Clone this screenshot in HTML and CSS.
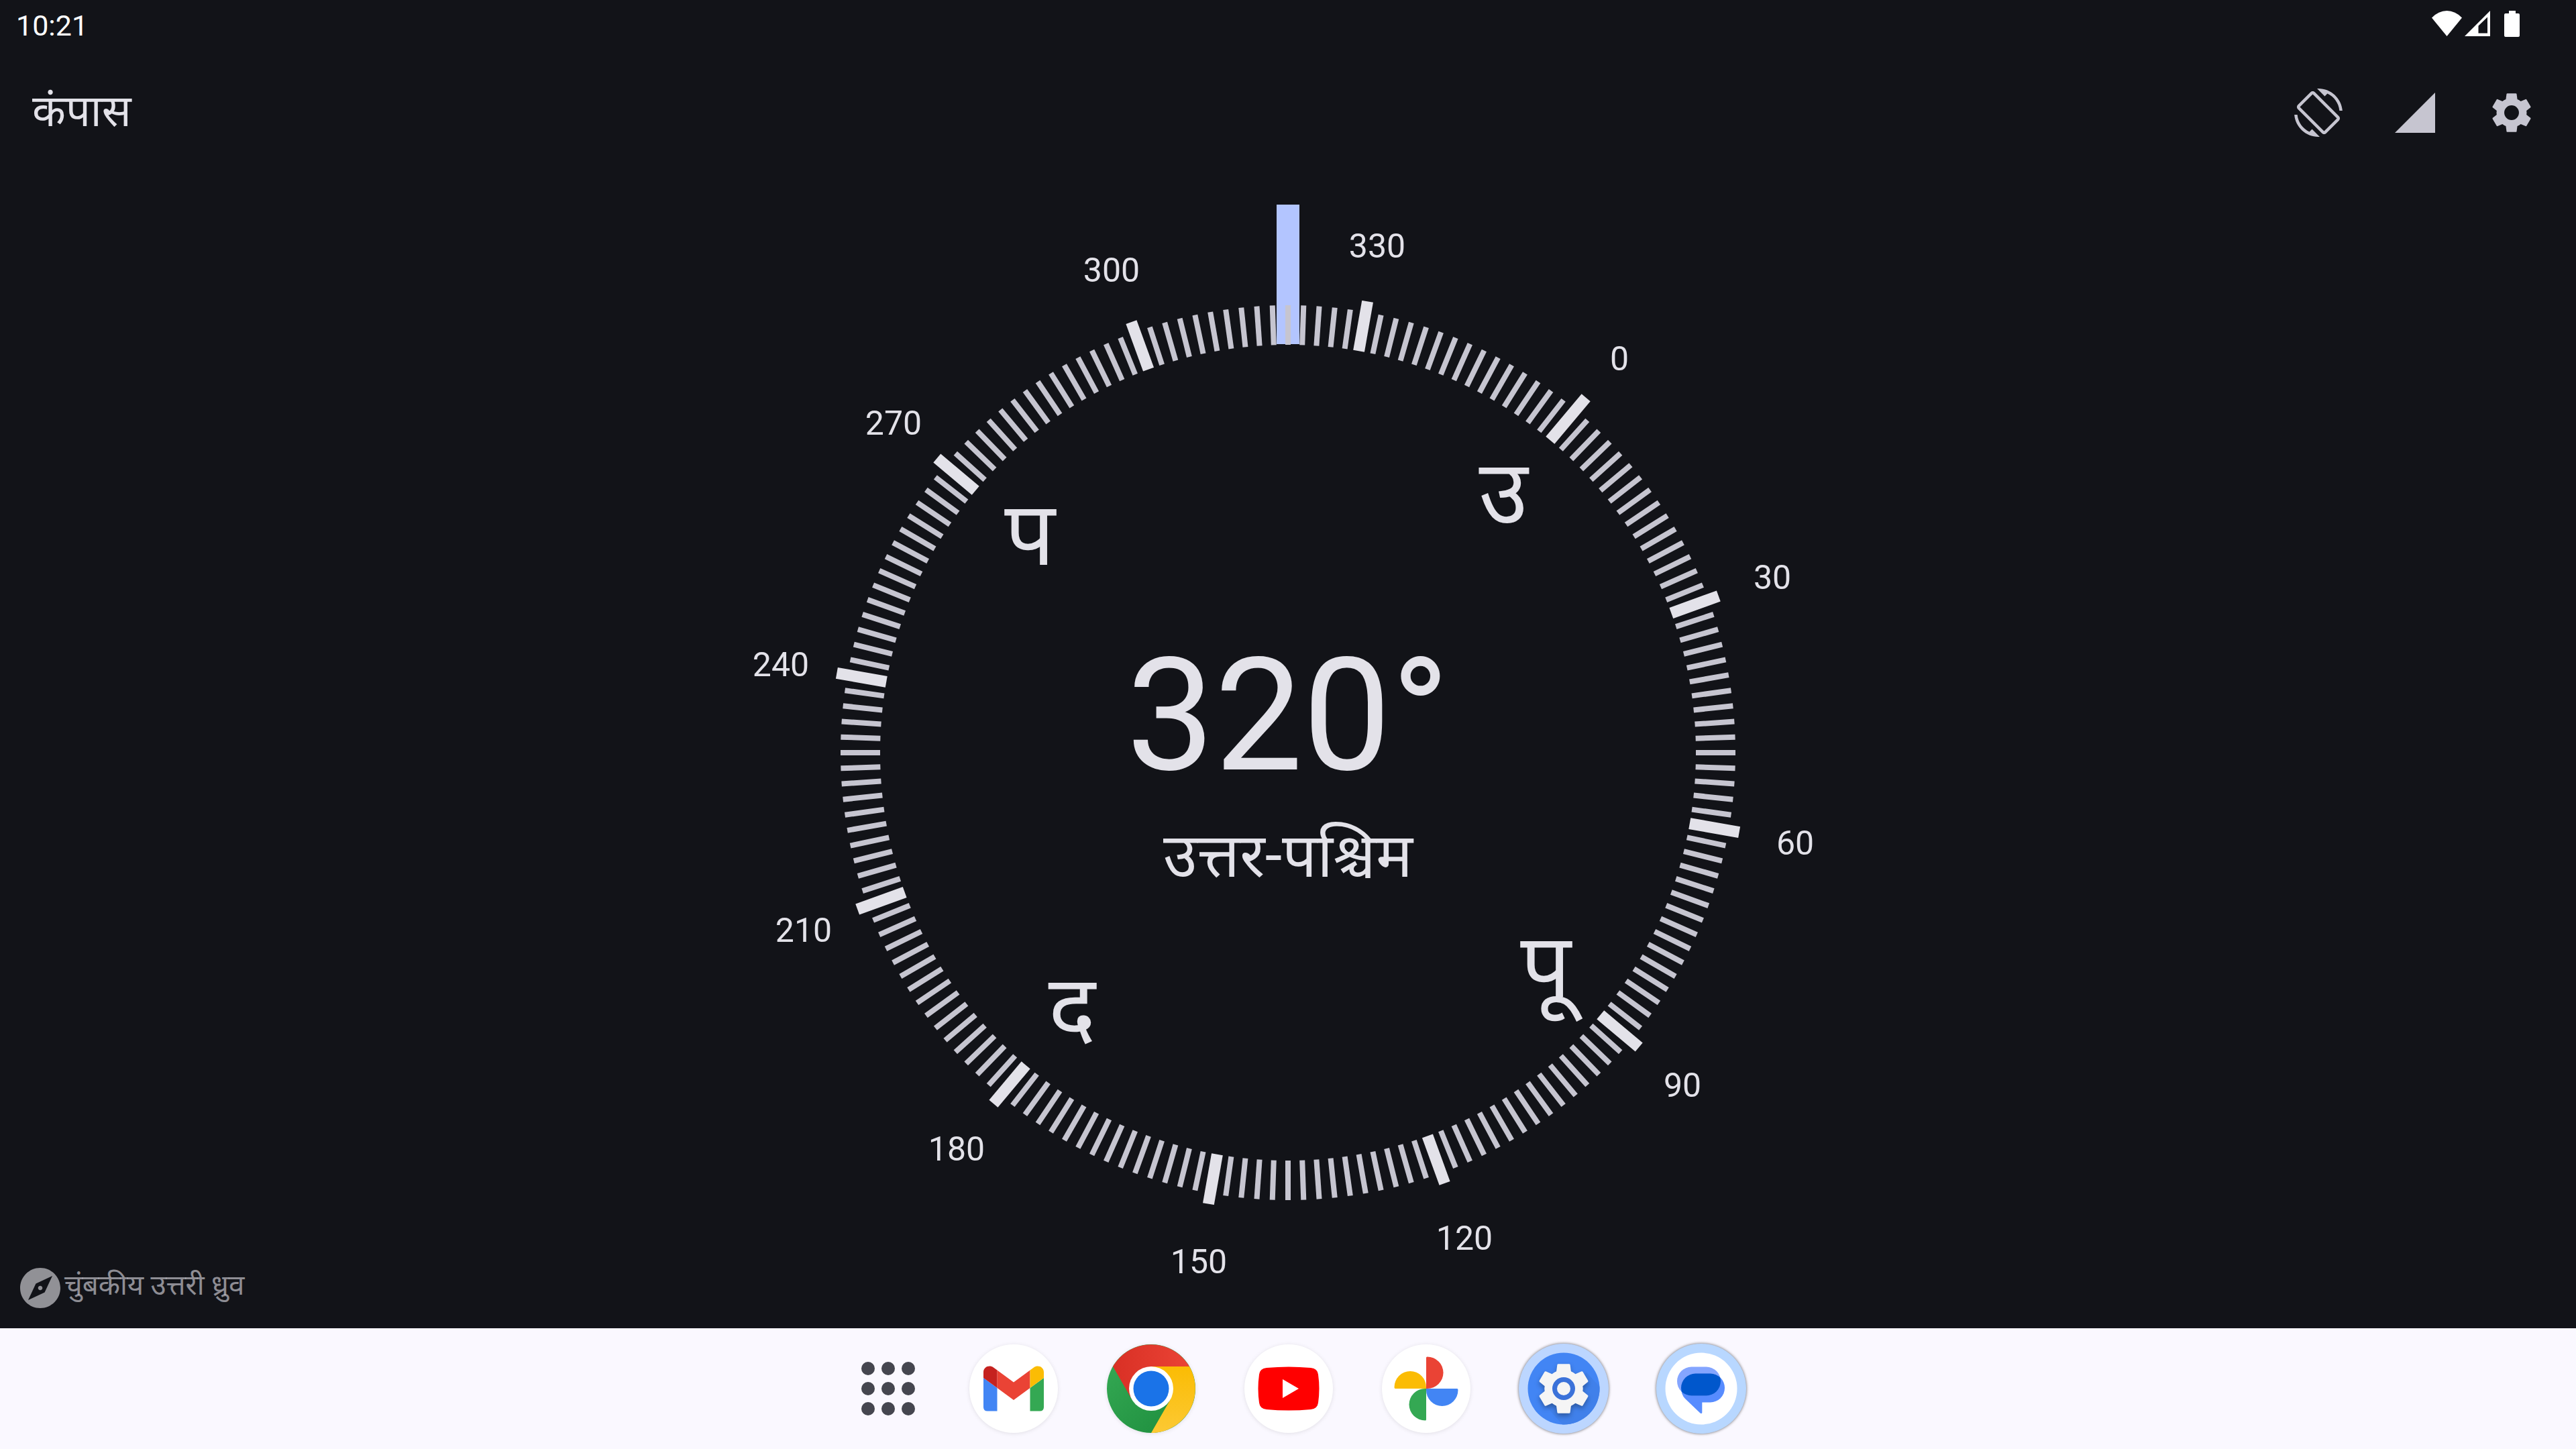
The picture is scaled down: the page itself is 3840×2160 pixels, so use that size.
FILE: index.html
```html
<!DOCTYPE html>
<html lang="hi">
<head>
<meta charset="utf-8">
<title>कंपास</title>
<link rel="stylesheet" href="styles.css">
</head>
<body>
<header class="status">
  <time class="status-time">10:21</time>
  <div class="status-icons">
    <svg class="wifi" viewBox="0 0 45 38"><path d="M0 10.500Q10 0 22.500 0T45 10.500L22.500 38z"/></svg>
    <svg class="cell" viewBox="0 0 38 38"><path fill-rule="evenodd" d="M38 0v38H0zM34 9.500 20.500 22.500V33.500H34z"/></svg>
    <svg class="battery" viewBox="0 0 23 39"><path d="M7 0h10v4h4q2 0 2 2v31q0 2-2 2H2q-2 0-2-2V6q0-2 2-2h5z"/></svg>
  </div>
</header>
<div class="toolbar">
  <h1 class="title">कंपास</h1>
  <div class="actions">
    <button class="action" aria-label="स्क्रीन घुमाना"><svg viewBox="0 0 24 24"><path d="M16.480 2.520c3.270 1.550 5.610 4.720 5.970 8.480h1.500C23.440 4.840 18.290 0 12 0l-.66.03 3.810 3.810 1.330-1.320zm-6.250-.77c-.59-.59-1.540-.59-2.120 0L1.750 8.110c-.59.59-.59 1.540 0 2.120l12.020 12.020c.59.59 1.540.59 2.120 0l6.360-6.360c.59-.59.59-1.540 0-2.120L10.230 1.750zm4.600 19.440L2.810 9.170l6.360-6.360 12.020 12.020-6.360 6.360zm-7.310.29C4.250 19.940 1.910 16.760 1.550 13H.05C.56 19.160 5.710 24 12 24l.66-.03-3.810-3.810-1.330 1.320z"/></svg></button>
    <button class="action" aria-label="सेंसर"><svg viewBox="0 0 24 24"><path d="M2 22h20V2z"/></svg></button>
    <button class="action" aria-label="सेटिंग"><svg viewBox="0 0 24 24"><path fill-rule="evenodd" d="M19.400 13l.1-1-.1-1 2-1.600q.2-.2.050-.5l-2-3.400q-.2-.3-.5-.2l-2.400 1q-.8-.6-1.700-1L14.500 2.700q-.1-.3-.4-.3h-4.200q-.3 0-.4.300L9.150 5.300q-.9.4-1.700 1l-2.400-1q-.3-.1-.5.2l-2 3.400q-.15.3.05.5l2 1.600-.1 1 .1 1-2 1.600q-.2.2-.05.5l2 3.400q.2.3.5.2l2.400-1q.8.6 1.700 1l.35 2.600q.1.300.4.300h4.200q.3 0 .4-.3l.35-2.600q.9-.4 1.700-1l2.400 1q.3.1.5-.2l2-3.400q.15-.3-.05-.5zM12 15.650a3.650 3.650 0 1 1 0-7.300 3.650 3.650 0 0 1 0 7.300z"/></svg></button>
  </div>
</div>
<main class="stage">
  <svg class="dial" viewBox="-858 -858 1716 1716">
    <rect class="marker" x="-17" y="-817" width="34" height="208"/>
    <g id="ticks"></g>
    <g class="degrees">
      <text x="133" y="-738">330</text>
      <text x="494" y="-570">0</text>
      <text x="722" y="-244">30</text>
      <text x="756" y="152">60</text>
      <text x="588" y="513">90</text>
      <text x="263" y="741">120</text>
      <text x="-133" y="776">150</text>
      <text x="-494" y="608">180</text>
      <text x="-722" y="282">210</text>
      <text x="-756" y="-114">240</text>
      <text x="-588" y="-474">270</text>
      <text x="-263" y="-702">300</text>
    </g>
    <g class="cardinals">
      <text x="321" y="-342">उ</text>
      <text x="384" y="364">पू</text>
      <text x="-322" y="426">द</text>
      <text x="-385" y="-280">प</text>
    </g>
    <text class="heading" x="0" y="25">320°</text>
    <text class="direction" x="0" y="185">उत्तर-पश्चिम</text>
  </svg>
  <p class="north">
    <svg viewBox="2 2 20 20"><path d="M12 10.900c-.61 0-1.100.49-1.100 1.100s.49 1.100 1.100 1.100c.61 0 1.100-.49 1.100-1.100s-.49-1.100-1.100-1.100zM12 2C6.480 2 2 6.480 2 12s4.480 10 10 10 10-4.480 10-10S17.520 2 12 2zm2.190 12.190L6 18l3.810-8.190L18 6l-3.810 8.190z"/></svg>
    <span>चुंबकीय उत्तरी ध्रुव</span>
  </p>
</main>
<nav class="taskbar">
  <button class="all-apps" aria-label="सभी ऐप्लिकेशन"><i></i><i></i><i></i><i></i><i></i><i></i><i></i><i></i><i></i></button>
  <button class="app" aria-label="Gmail"><svg viewBox="-66 -66 132 132">
    <path fill="#4285f4" d="M-45-16l20.500 15v34.500H-39q-6 0-6-6z"/>
    <path fill="#34a853" d="M45-16L24.500-1v34.500H39q6 0 6-6z"/>
    <path fill="#ea4335" d="M-24.500-27.500L0-9.500l24.500-18V-1L0 17-24.500-1z"/>
    <path fill="#c5221f" d="M-45-16v-8.500c0-8 9-11.500 15-7l5.500 4V-1z"/>
    <path fill="#fbbc04" d="M45-16v-8.500c0-8-9-11.500-15-7l-5.500 4V-1z"/>
  </svg></button>
  <button class="app" aria-label="Chrome"><svg viewBox="-66 -66 132 132">
    <defs>
      <linearGradient id="red"><stop offset="0" stop-color="#d93025"/><stop offset="1" stop-color="#ea4335"/></linearGradient>
      <linearGradient id="yellow" x1="0" y1="1" x2="0" y2="0"><stop offset="0" stop-color="#fcc934"/><stop offset="1" stop-color="#fbbc04"/></linearGradient>
      <linearGradient id="green" x1="0" y1="0" x2="1" y2="1"><stop offset=".1" stop-color="#34a853"/><stop offset=".9" stop-color="#1e8e3e"/></linearGradient>
    </defs>
    <circle r="66" fill="url(#green)"/>
    <path fill="url(#red)" d="M-57-33A66 66 0 0 1 57-33H0L-28.500 16.500z"/>
    <path fill="url(#yellow)" d="M57-33A66 66 0 0 1 0 66L28.500 16.500 0-33z"/>
    <circle r="33" fill="#fff"/><circle r="26.500" fill="#1a73e8"/>
  </svg></button>
  <button class="app" aria-label="YouTube"><svg viewBox="-66 -66 132 132">
    <path fill="#f00" d="M-33-31Q0-34 33-31 43-30 44-21 47 0 44 21 43 30 33 31 0 34-33 31-43 30-44 21-47 0-44-21-43-30-33-31z"/>
    <path fill="#fff" d="M-9-14L15 0-9 14z"/>
  </svg></button>
  <button class="app" aria-label="Photos"><svg viewBox="-66 -66 132 132">
    <path fill="#ea4335" d="M0 0v-46q0-1.500 1.500-1.500a24 23.750 0 0 1 0 47.500z"/>
    <path fill="#4285f4" d="M0 0h46q1.500 0 1.500 2a23.750 24 0 0 1-47.500 0z"/>
    <path fill="#34a853" d="M0 0v46q0 1.500-1.500 1.500a24 23.750 0 0 1 0-47.500z"/>
    <path fill="#fbbc04" d="M0 0h-46q-1.500 0-1.500-2a23.750 24 0 0 1 47.500 0z"/>
  </svg></button>
  <button class="app app-settings" aria-label="सेटिंग"><svg viewBox="-66 -66 132 132">
    <circle r="53.500" fill="#4285f4"/>
    <path fill="#4080ea" d="M34-24L53.500-3A53.500 53.500 0 0 1-2 53.500L-28 24z"/>
    <g class="gear" transform="translate(-46 -46) scale(3.833)"><path fill="#f5f5f5" d="M19.400 13l.1-1-.1-1 2-1.600q.2-.2.050-.5l-2-3.400q-.2-.3-.5-.2l-2.400 1q-.8-.6-1.700-1L14.500 2.700q-.1-.3-.4-.3h-4.200q-.3 0-.4.300L9.150 5.300q-.9.4-1.700 1l-2.400-1q-.3-.1-.5.2l-2 3.400q-.15.3.05.5l2 1.600-.1 1 .1 1-2 1.600q-.2.2-.05.5l2 3.400q.2.3.5.2l2.400-1q.8.6 1.700 1l.35 2.600q.1.300.4.300h4.200q.3 0 .4-.3l.35-2.600q.9-.4 1.700-1l2.400 1q.3.1.5-.2l2-3.400q.15-.3-.05-.5z"/></g>
    <circle r="17" fill="#3b72d9"/><circle r="10" fill="#f5f5f5"/>
  </svg></button>
  <button class="app app-messages" aria-label="Messages"><svg viewBox="-66 -66 132 132">
    <clipPath id="bubble"><rect x="-36" y="-32.500" width="65" height="43" rx="21.500"/></clipPath>
    <circle r="53.500" fill="#fff"/>
    <path fill="#578cff" d="M-29.500-1Q-30 9-24 15L-1.500 36.500Q1.300 38 1.300 35.500V20z"/>
    <rect x="-30" y="-22.500" width="65" height="43" rx="21.500" fill="#578cff"/>
    <rect x="-36" y="-32.500" width="65" height="43" rx="21.500" fill="#84a5ff"/>
    <rect x="-30" y="-22.500" width="65" height="43" rx="21.500" fill="#0057cc" clip-path="url(#bubble)"/>
  </svg></button>
</nav>
<script src="dial.js"></script>
</body>
</html>
```
FILE: dial.js
```js
// Draws one tick every two degrees, turned by the current heading.
const heading = 320;
const ticks = document.getElementById('ticks');
for (let deg = 0; deg < 360; deg += 2) {
  const major = deg % 30 === 0;
  const outer = deg === 0 ? 691 : major ? 683 : 667;
  const tick = document.createElementNS('http://www.w3.org/2000/svg', 'line');
  tick.setAttribute('y1', -608);
  tick.setAttribute('y2', -outer);
  tick.setAttribute('class', major ? 'tick-major' : 'tick');
  tick.setAttribute('transform', `rotate(${deg - heading})`);
  ticks.append(tick);
}
```
FILE: styles.css
```css
* { box-sizing: border-box; margin: 0; }
body {
  display: flex;
  flex-direction: column;
  min-height: 100vh;
  background: #121318;
  color: #e3e2e9;
  font-family: Roboto, "Noto Sans Devanagari", "Noto Sans", sans-serif;
}
button { border: 0; padding: 0; background: none; }
svg { display: block; }
.status {
  display: flex;
  justify-content: space-between;
  height: 72px;
  padding: 12px 84px 0 24px;
  color: #fff;
}
.status-time { font-size: 43px; line-height: 52px; }
.status-icons { display: flex; gap: 4px; padding-top: 4px; fill: #fff; }
.wifi { width: 45px; height: 38px; }
.cell { width: 38px; height: 38px; }
.battery { width: 23px; height: 39px; margin-left: 17px; }
.toolbar {
  display: flex;
  align-items: center;
  justify-content: space-between;
  height: 192px;
  padding: 0 60px 0 48px;
}
.title { padding-bottom: 4px; font-size: 65px; line-height: 96px; font-weight: 400; }
.actions { display: flex; gap: 72px; }
.action { width: 72px; height: 72px; fill: #c6c5d0; }
.stage {
  position: relative;
  flex: 1;
  display: flex;
  justify-content: center;
  min-height: 0;
}
.dial { height: calc(100vh - 444px); aspect-ratio: 1; }
.dial text { fill: #e3e2e9; text-anchor: middle; }
.marker { fill: #b3c5ff; }
.tick { stroke: #c6c5d0; stroke-width: 8px; }
.tick-major { stroke: #e3e2e9; stroke-width: 17px; }
.degrees { font-size: 50px; }
.cardinals { font-size: 133px; }
.heading { font-size: 234px; }
.direction { font-size: 92px; }
.north {
  position: absolute;
  left: 30px;
  bottom: 30px;
  display: flex;
  gap: 6px;
  height: 60px;
  color: rgba(227, 226, 233, 0.6);
  font-size: 42px;
  line-height: 52px;
}
.north svg { width: 60px; height: 60px; fill: #919196; }
.taskbar {
  display: flex;
  align-items: center;
  justify-content: center;
  gap: 73px;
  height: 180px;
  padding-left: 46px;
  background: #faf8ff;
}
.all-apps {
  display: grid;
  grid-template-columns: repeat(3, 20px);
  gap: 10px;
  margin-right: 8px;
}
.all-apps i { height: 20px; border-radius: 50%; background: #45464f; }
.app {
  width: 132px;
  height: 132px;
  border-radius: 50%;
  background: #fff;
  box-shadow: 0 1px 6px rgba(0, 0, 0, 0.1);
}
.app-settings { background: #bcd6ff; box-shadow: 0 0 0 1px #bcd6ff, 0 0 4px 1px rgba(0, 0, 0, 0.6); }
.app-messages { background: #b8d7ff; box-shadow: 0 0 0 1px #b8d7ff, 0 0 4px 1px rgba(0, 0, 0, 0.6); }
.gear { filter: drop-shadow(0 1px 1px rgba(0, 0, 0, 0.3)); }
```
